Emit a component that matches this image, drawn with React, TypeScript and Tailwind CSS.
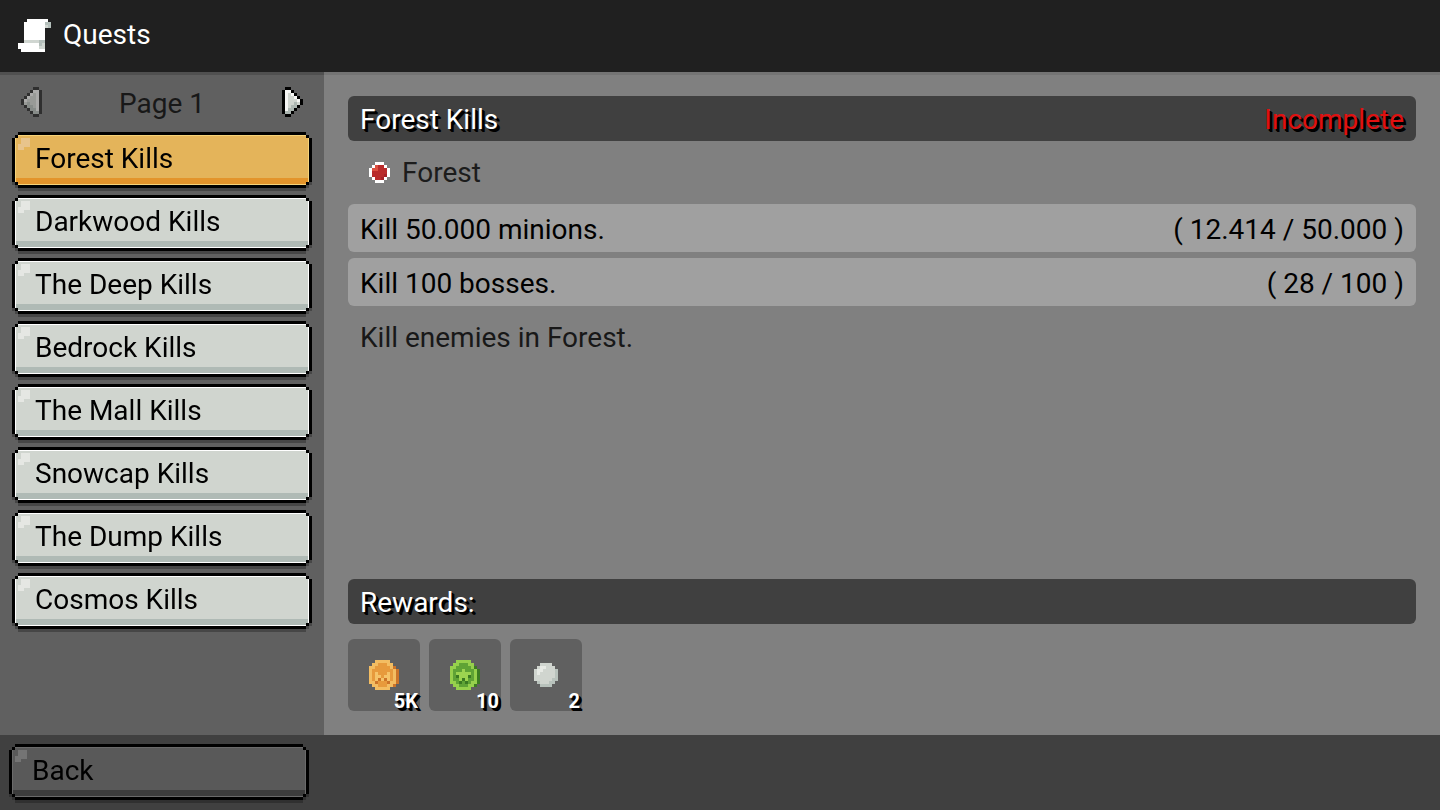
import React, { useState } from "react";
import clsx from "clsx";

const quests = ["Forest", "Darkwood", "The Deep", "Bedrock", "The Mall", "Snowcap", "The Dump", "Cosmos"];

const requirements = [
	{ text: "Kill 50.000 minions.", progress: "( 12.414 / 50.000 )" },
	{ text: "Kill 100 bosses.", progress: "( 28 / 100 )" },
];

// corners stepped by 3px, two steps and one step
const stepClip =
	"[clip-path:polygon(6px_0,calc(100%-6px)_0,calc(100%-6px)_3px,calc(100%-3px)_3px,calc(100%-3px)_6px,100%_6px,100%_calc(100%-6px),calc(100%-3px)_calc(100%-6px),calc(100%-3px)_calc(100%-3px),calc(100%-6px)_calc(100%-3px),calc(100%-6px)_100%,6px_100%,6px_calc(100%-3px),3px_calc(100%-3px),3px_calc(100%-6px),0_calc(100%-6px),0_6px,3px_6px,3px_3px,6px_3px)]";
const notchClip =
	"[clip-path:polygon(3px_0,calc(100%-3px)_0,calc(100%-3px)_3px,100%_3px,100%_calc(100%-3px),calc(100%-3px)_calc(100%-3px),calc(100%-3px)_100%,3px_100%,3px_calc(100%-3px),0_calc(100%-3px),0_3px,3px_3px)]";

const outlinedText = "text-white [text-shadow:2px_2px_0_#000,3px_3px_0_#000]";

type PixelArtProps = {
	rows: string[];
	colors: Record<string, string>;
	className?: string;
};

const PixelArt = ({ rows, colors, className }: PixelArtProps) => (
	<svg
		width={rows[0].length * 3}
		height={rows.length * 3}
		viewBox={`0 0 ${rows[0].length} ${rows.length}`}
		shapeRendering="crispEdges"
		className={clsx("shrink-0", className)}
		aria-hidden="true"
	>
		{rows.map((row, y) =>
			row.split("").map((cell, x) =>
				colors[cell] ? <rect key={`${x}-${y}`} x={x} y={y} width={1} height={1} fill={colors[cell]} /> : null
			)
		)}
	</svg>
);

const scroll = {
	rows: [
		"...WWWWWWW.",
		"..WWWWWWWGG",
		"..WWWWWWWLG",
		"..WWWWWWW..",
		"..WWWWWWW..",
		"..WWWWWWW..",
		"..WWWWWWW..",
		"..LLLLLGG..",
		"WWWWWWWGL..",
		"WWWWWWWLL..",
		".WWWWWWWW..",
	],
	colors: { W: "#ffffff", L: "#d0d6d1", G: "#b4bfbb" },
};

const arrow = {
	rows: [
		".KK....",
		"KWWK...",
		"KWLWK..",
		"KWLLWK.",
		"KWLLLWK",
		"KWLLGLK",
		"KWLGGK.",
		"KWGGK..",
		"KGGK...",
		".KK....",
	],
	colors: { K: "#000000", W: "#f6f6f4", L: "#d0d5cf", G: "#acb6b1" },
};

const redOrb = {
	rows: [
		"..WWW..",
		".WLRRW.",
		"WLLRRRW",
		"WRRRRRW",
		"WRRRRDW",
		".WRRDW.",
		"..WWW..",
	],
	colors: { W: "#ffffff", L: "#dc5040", R: "#b92b2b", D: "#a52228" },
};

const coinRows = [
	"..LLLLL...",
	".LLMMMLL..",
	"LLMMMMMLD.",
	"LMMMMMMMLD",
	"LMHMMMHMLD",
	"LMHHMHHMLD",
	"LMHDHDHMLD",
	"LLDMMMDLLD",
	".LLMMMLLD.",
	"..LLLLL...",
];

const tokenRows = [
	"..LLLLL...",
	".LLMMMLL..",
	"LLMMMMMLD.",
	"LMMMHMMMLD",
	"LMHHHHHMLD",
	"LMDHHHDMLD",
	"LMMHDHMMLD",
	"LLMDMDMLLD",
	".LLMMMLLD.",
	"..LLLLL...",
];

const rewards = [
	{
		name: "Coins",
		amount: "5K",
		rows: coinRows,
		colors: { L: "#f3bd62", M: "#e79a3c", H: "#f5c369", D: "#cc7429" },
	},
	{
		name: "Tokens",
		amount: "10",
		rows: tokenRows,
		colors: { L: "#96d04c", M: "#5fa335", H: "#9cd450", D: "#3b7a22" },
	},
	{
		name: "Orbs",
		amount: "2",
		rows: [
			"..LLLL..",
			".LHHLLL.",
			"LHHLLLLG",
			"LHLLLLLG",
			"LLLLLLLG",
			"LLLLLLGG",
			".GLLLGG.",
			"..GGGG..",
		],
		colors: { H: "#e7eae5", L: "#d0d5cf", G: "#b8c2bc" },
	},
];

const buttonTones = {
	light: { face: "bg-[#d0d5cf] border-[#afbab5]", edge: "bg-white", shine: "bg-[#e5e7e3]", shadow: "drop-shadow-[0_3px_0_#464646]" },
	active: { face: "bg-[#e4b45a] border-[#e3942b]", edge: "bg-[#f6d37a]", shine: "bg-[#e8c48c]", shadow: "drop-shadow-[0_3px_0_#464646]" },
	dark: { face: "bg-[#595959] border-[#3c3c3c]", edge: "bg-[#6a6a6a]", shine: "bg-[#747474]", shadow: "drop-shadow-[0_3px_0_#303030]" },
};

type PixelButtonProps = {
	tone: keyof typeof buttonTones;
	onClick?: () => void;
	children: React.ReactNode;
};

const PixelButton = ({ tone, onClick, children }: PixelButtonProps) => {
	const { face, edge, shine, shadow } = buttonTones[tone];

	return (
		<button type="button" onClick={onClick} className={clsx("block w-full cursor-pointer text-left text-black", shadow)}>
			<span className={clsx("block bg-black p-[3px]", stepClip)}>
				<span className={clsx("block p-px", edge, notchClip)}>
					<span className={clsx("relative flex h-12 items-center border-b-[6px] px-[19px] pt-1", face)}>
						<span
							className={clsx(
								"absolute left-[2px] top-[2px] size-3 [clip-path:polygon(3px_0,100%_0,100%_9px,6px_9px,6px_100%,0_100%,0_6px,3px_6px)]",
								shine
							)}
						/>
						{children}
					</span>
				</span>
			</span>
		</button>
	);
};

const App = () => {
	const [selected, setSelected] = useState("Forest");

	return (
		<div className="flex min-h-screen flex-col bg-[#808080] font-['Roboto',sans-serif] text-[28px] leading-8 text-black">
			<header className="flex h-[72px] items-center gap-3 bg-[#202020] px-[18px] pb-[2px] text-white">
				<PixelArt {...scroll} />
				<h1>Quests</h1>
			</header>

			<div className="flex flex-1">
				<aside className="w-[324px] shrink-0 border-t-[3px] border-[#505050] bg-[#606060] px-3 pt-3">
					<nav aria-label="Quests">
						<div className="flex h-[30px] items-center justify-between px-[9px]">
							<button type="button" aria-label="Previous page" disabled>
								<PixelArt {...arrow} className="-scale-x-100 opacity-50" />
							</button>
							<span className="pt-1 text-[#181818]">Page 1</span>
							<button type="button" aria-label="Next page" className="cursor-pointer">
								<PixelArt {...arrow} />
							</button>
						</div>

						<ul className="mt-[15px] flex flex-col gap-[7px]">
							{quests.map((quest) => (
								<li key={quest}>
									<PixelButton tone={quest === selected ? "active" : "light"} onClick={() => setSelected(quest)}>
										{quest} Kills
									</PixelButton>
								</li>
							))}
						</ul>
					</nav>
				</aside>

				<main className="flex flex-1 flex-col border-t-[3px] border-[#747474] px-6 pb-6 pt-[21px]">
					<div className="flex h-[45px] items-center justify-between rounded-md bg-[#404040] px-3 pt-[2px]">
						<h2 className={outlinedText}>Forest Kills</h2>
						<span className="text-[#e01010] [text-shadow:2px_2px_0_#000,3px_3px_0_#000]">Incomplete</span>
					</div>

					<div className="flex h-[63px] items-center gap-3 px-[21px] text-[#1c1c1c]">
						<PixelArt {...redOrb} />
						<span>Forest</span>
					</div>

					<ul className="flex flex-col gap-[6px]">
						{requirements.map(({ text, progress }) => (
							<li key={text} className="flex h-12 items-center justify-between rounded-md bg-[#a0a0a0] px-3 pt-1">
								<span>{text}</span>
								<span>{progress}</span>
							</li>
						))}
					</ul>

					<p className="mt-4 px-3 text-[#181818]">Kill enemies in Forest.</p>

					<section className="mt-auto">
						<div className="flex h-[45px] items-center rounded-md bg-[#404040] px-3 pt-[2px]">
							<h2 className={outlinedText}>Rewards:</h2>
						</div>
						<ul className="mt-[15px] flex gap-[9px]">
							{rewards.map(({ name, amount, rows, colors }) => (
								<li
									key={name}
									aria-label={name}
									className="relative flex size-[72px] items-center justify-center rounded-md bg-[#606060]"
								>
									<PixelArt rows={rows} colors={colors} />
									<span className={clsx("absolute bottom-0 right-[2px] text-xl font-bold leading-5", outlinedText)}>
										{amount}
									</span>
								</li>
							))}
						</ul>
					</section>
				</main>
			</div>

			<footer className="h-[75px] bg-[#404040] px-[9px] pt-[9px]">
				<div className="w-[300px]">
					<PixelButton tone="dark">Back</PixelButton>
				</div>
			</footer>
		</div>
	);
};

export default App;
